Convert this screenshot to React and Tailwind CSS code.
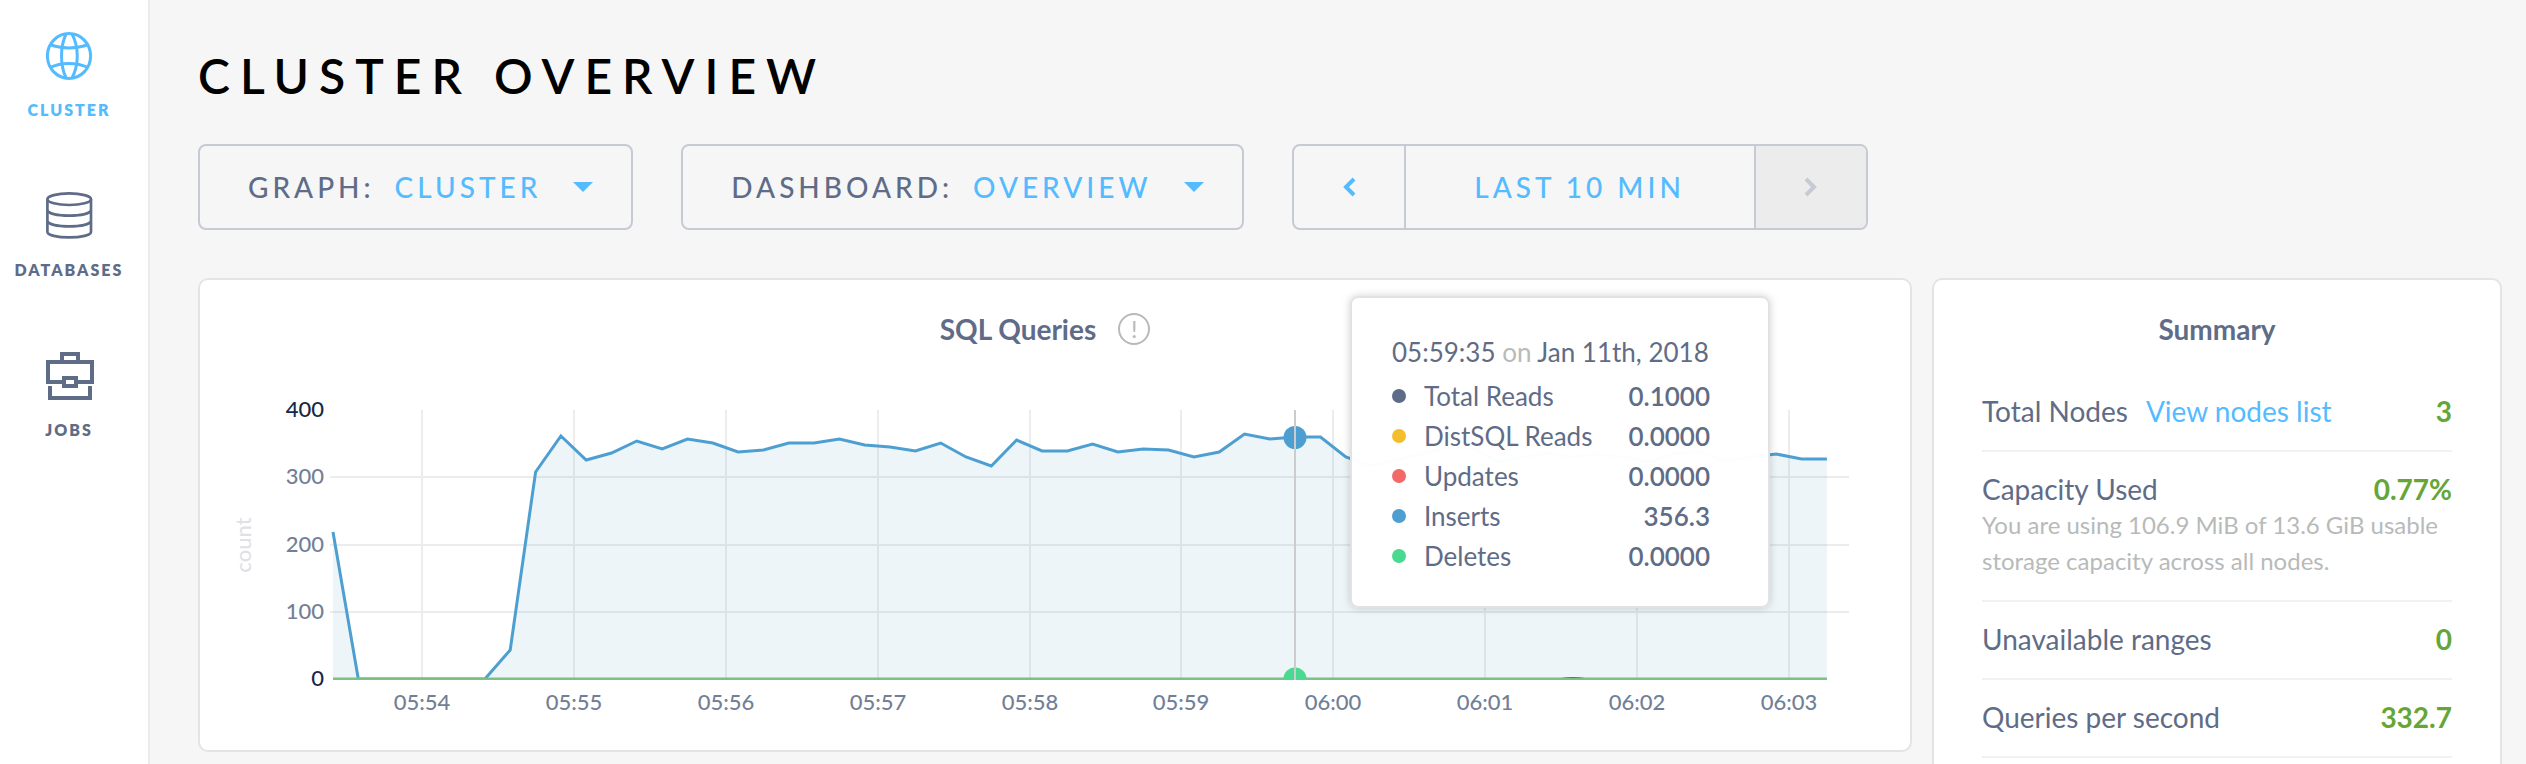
import React from "react";

const SERIES_COLORS = {
  reads: "#5f6c87",
  distsql: "#f2be2c",
  updates: "#f16969",
  inserts: "#4e9fd1",
  deletes: "#49d990",
};

const PLOT = { left: 133, step: 25.32, top: 30, bottom: 299 };

// Heights of the "Inserts" series, one sample every ten seconds.
const INSERTS = [
  152, 299, 299, 299, 299, 299, 299, 270, 92, 56, 80, 73, 61, 69, 59, 63, 72, 70, 63, 63,
  59, 65, 67, 71, 63, 77, 86, 60, 71, 71, 64, 72, 69, 70, 77, 72, 54, 59, 57, 57, 77, 86,
  80, 74, 68, 68, 82, 77, 73, 77, 74, 77, 82, 73, 72, 81, 77, 74, 79, 79,
];

const X_TICKS = ["05:54", "05:55", "05:56", "05:57", "05:58", "05:59", "06:00", "06:01", "06:02", "06:03"];
const Y_TICKS = [
  { label: "400", y: 30, strong: true },
  { label: "300", y: 97 },
  { label: "200", y: 165 },
  { label: "100", y: 232 },
  { label: "0", y: 299, strong: true },
];

function GlobeIcon() {
  return (
    <svg className="size-12" viewBox="0 0 48 48" fill="none" stroke="currentColor" strokeWidth="3" aria-hidden="true">
      <ellipse cx="23" cy="24" rx="21.6" ry="22.5" />
      <path d="M20 2C14 15 14 33 20 46M26 2C33 15 33 33 26 46" />
      <path d="M4 12.5C15 17 31 17 42 12.5M4 35.5C15 30 31 30 42 35.5" />
    </svg>
  );
}

function DatabaseIcon() {
  return (
    <svg className="size-12" viewBox="0 0 48 48" fill="none" stroke="currentColor" strokeWidth="2.7" aria-hidden="true">
      <ellipse cx="23.2" cy="7.2" rx="21.8" ry="5.8" />
      <path d="M1.4 7.2V40C1.4 43 11 45.4 23.2 45.4S45 43 45 40V7.2" />
      <path d="M1.4 18.6C3 21.6 12 23.6 23.2 23.6S43.4 21.6 45 18.6" />
      <path d="M1.4 29.4C3 32.4 12 34.4 23.2 34.4S43.4 32.4 45 29.4" />
    </svg>
  );
}

function BriefcaseIcon() {
  return (
    <svg className="size-12" viewBox="0 0 48 48" fill="none" stroke="currentColor" strokeWidth="4" aria-hidden="true">
      <path d="M16 10V2H32V10" />
      <rect x="2" y="10" width="44" height="20" />
      <rect x="18" y="26" width="12" height="8" fill="#fff" />
      <path d="M4 34V46H44V34" />
    </svg>
  );
}

function NavItem({ icon, label, active }) {
  return (
    <a
      href="#"
      aria-current={active ? "page" : undefined}
      className={"flex flex-col items-center gap-4 " + (active ? "text-[#55bbff]" : "text-[#5f6c87]")}
    >
      {icon}
      <span className="pr-0.5 text-base leading-7 font-extrabold tracking-[2px]">{label}</span>
    </a>
  );
}

function Dropdown({ label, value }) {
  return (
    <label className="flex h-[86px] items-center rounded-lg border-2 border-[#c6cad5] pr-[38px] pl-12 text-[28px] font-medium tracking-[4px]">
      <span className="text-[#5f6c87]">{label}:</span>
      <select className="ml-5 field-sizing-content appearance-none bg-transparent text-[#55bbff] tracking-[4px]">
        <option>{value}</option>
      </select>
      <svg className="ml-8 h-[10px] w-5" viewBox="0 0 20 10" fill="#55bbff" aria-hidden="true">
        <path d="M0 0H20L10 10Z" />
      </svg>
    </label>
  );
}

function TimeRange() {
  return (
    <div className="flex h-[86px] divide-x-2 divide-[#c6cad5] overflow-hidden rounded-lg border-2 border-[#c6cad5]">
      <button type="button" aria-label="Previous" className="flex w-28 items-center justify-center text-[#55bbff]">
        <svg className="h-5 w-4" viewBox="0 0 16 20" fill="none" stroke="currentColor" strokeWidth="4" aria-hidden="true">
          <path d="M13 2L5 10L13 18" />
        </svg>
      </button>
      <button type="button" className="w-[350px] text-[28px] font-medium tracking-[4px] text-[#55bbff]">
        LAST 10 MIN
      </button>
      <button type="button" aria-label="Next" disabled className="flex w-[110px] items-center justify-center bg-[#ececec] text-[#c6cad5]">
        <svg className="h-5 w-4" viewBox="0 0 16 20" fill="none" stroke="currentColor" strokeWidth="4" aria-hidden="true">
          <path d="M3 2L11 10L3 18" />
        </svg>
      </button>
    </div>
  );
}

function Chart() {
  const points = INSERTS.map((y, i) => `${(PLOT.left + i * PLOT.step).toFixed(1)},${y}`);
  const end = PLOT.left + (INSERTS.length - 1) * PLOT.step;
  const cursor = 1095;
  return (
    <svg className="block w-full font-[Lato,sans-serif]" viewBox="0 0 1710 370" role="img" aria-label="SQL Queries">
      <clipPath id="plot-area">
        <rect x="130" y="30" width="1520" height="270" />
      </clipPath>
      <text transform="translate(51 165) rotate(-90)" textAnchor="middle" fontSize="22" fontWeight="500" fill="#dfe1e7">
        count
      </text>
      {Y_TICKS.map((t) => (
        <g key={t.label}>
          {!t.strong && <path d={`M130 ${t.y}H1649`} stroke="#ececec" strokeWidth="2" />}
          <text x="124" y={t.y + 7} textAnchor="end" fontSize="22" fontWeight="500" fill={t.strong ? "#152849" : "#737f96"}>
            {t.label}
          </text>
        </g>
      ))}
      {X_TICKS.map((t, i) => (
        <g key={t}>
          <path d={`M${222 + i * 152 - Math.round(i / 9)} 30V298`} stroke="#ececec" strokeWidth="2" />
          <text x={222 + i * 152 - Math.round(i / 9)} y="330" textAnchor="middle" fontSize="22" fontWeight="500" fill="#737f96">
            {t}
          </text>
        </g>
      ))}
      <polygon points={`${PLOT.left},299 ${points.join(" ")} ${end},299`} fill="#4b9fc4" fillOpacity="0.1" />
      <g clipPath="url(#plot-area)">
        <polyline points={points.join(" ")} fill="none" stroke={SERIES_COLORS.inserts} strokeWidth="3" />
        <path d={`M${PLOT.left} 298.5H${end}`} stroke="#8fb57c" strokeWidth="2" />
        <path d={`M${PLOT.left} 299.2H${end}`} stroke="#66cc8c" strokeWidth="1.6" />
        <path d="M1361 298Q1373 296 1385 298" fill={SERIES_COLORS.reads} />
        <circle cx={cursor} cy="57.5" r="11.5" fill={SERIES_COLORS.inserts} />
        <circle cx={cursor} cy="299" r="11.5" fill={SERIES_COLORS.deletes} />
        <path d={`M${cursor} 30V300`} stroke="#ccc" strokeWidth="2" />
      </g>
    </svg>
  );
}

const TOOLTIP_ROWS = [
  { name: "Total Reads", value: "0.1000", dot: "bg-[#5f6c87]" },
  { name: "DistSQL Reads", value: "0.0000", dot: "bg-[#f2be2c]" },
  { name: "Updates", value: "0.0000", dot: "bg-[#f16969]" },
  { name: "Inserts", value: "356.3", dot: "bg-[#4e9fd1]" },
  { name: "Deletes", value: "0.0000", dot: "bg-[#49d990]" },
];

function Tooltip() {
  return (
    <div className="absolute top-4 left-[1150px] h-[312px] w-[420px] rounded-lg border-2 border-[#e2e2e2] bg-white/98 pt-[34px] pr-[58px] pl-10 text-[26px] leading-10 text-[#5f6c87] shadow-[0_0_8px_rgba(0,0,0,0.18)]">
      <p className="mb-1 whitespace-nowrap">
        05:59:35 <span className="text-[#b8baba]">on</span> Jan 11th, 2018
      </p>
      <ul>
        {TOOLTIP_ROWS.map((r) => (
          <li key={r.name} className="flex items-center">
            <span className={"mr-[18px] size-[14px] rounded-full " + r.dot} />
            <span>{r.name}</span>
            <span className="ml-auto font-semibold">{r.value}</span>
          </li>
        ))}
      </ul>
    </div>
  );
}

function SummaryRow({ label, value, link, note }) {
  return (
    <div className="border-b-2 border-[#f1f1f1] pt-[19px] pb-[21px]">
      <div className="flex text-[28px] leading-9">
        <dt>
          {label}
          {link && (
            <a href="#" className="ml-[18px] text-[#55bbff]">
              {link}
            </a>
          )}
        </dt>
        <dd className="ml-auto font-bold text-[#65a637]">{value}</dd>
      </div>
      {note && <dd className="text-2xl leading-9 text-[#b8baba]">{note}</dd>}
    </div>
  );
}

export default function App() {
  return (
    <div className="flex h-screen overflow-hidden bg-[#f6f6f6] font-[Lato,sans-serif] text-[#5f6c87]">
      <nav className="flex w-[150px] flex-none flex-col gap-17 border-r-2 border-[#ebebeb] bg-white pt-8 pr-2">
        <NavItem icon={<GlobeIcon />} label="CLUSTER" active />
        <NavItem icon={<DatabaseIcon />} label="DATABASES" />
        <NavItem icon={<BriefcaseIcon />} label="JOBS" />
      </nav>
      <main className="min-w-0 flex-1 pt-12 pr-6 pl-12">
        <h1 className="mb-10 text-5xl leading-14 font-semibold tracking-[10px] text-black">CLUSTER OVERVIEW</h1>
        <div className="mb-12 flex gap-12">
          <Dropdown label="GRAPH" value="CLUSTER" />
          <Dropdown label="DASHBOARD" value="OVERVIEW" />
          <TimeRange />
        </div>
        <div className="flex items-start gap-5">
          <section className="relative min-w-0 flex-1 rounded-[10px] border-2 border-[#e4e4e4] bg-white">
            <header className="flex h-[100px] items-center justify-center gap-[22px] pr-5 pb-0.5">
              <h2 className="text-[28px] leading-9 font-bold">SQL Queries</h2>
              <button
                type="button"
                aria-label="About this graph"
                className="flex size-8 items-center justify-center rounded-full border-2 border-[#b8baba] text-2xl leading-none text-[#b8baba]"
              >
                !
              </button>
            </header>
            <Chart />
            <Tooltip />
          </section>
          <section className="w-[570px] flex-none rounded-[10px] border-2 border-[#e4e4e4] bg-white px-12 pb-12">
            <h2 className="pt-[31px] pb-[27px] text-center text-[28px] leading-9 font-bold">Summary</h2>
            <dl>
              <SummaryRow label="Total Nodes" link="View nodes list" value="3" />
              <SummaryRow
                label="Capacity Used"
                value="0.77%"
                note="You are using 106.9 MiB of 13.6 GiB usable storage capacity across all nodes."
              />
              <SummaryRow label="Unavailable ranges" value="0" />
              <SummaryRow label="Queries per second" value="332.7" />
            </dl>
          </section>
        </div>
      </main>
    </div>
  );
}
